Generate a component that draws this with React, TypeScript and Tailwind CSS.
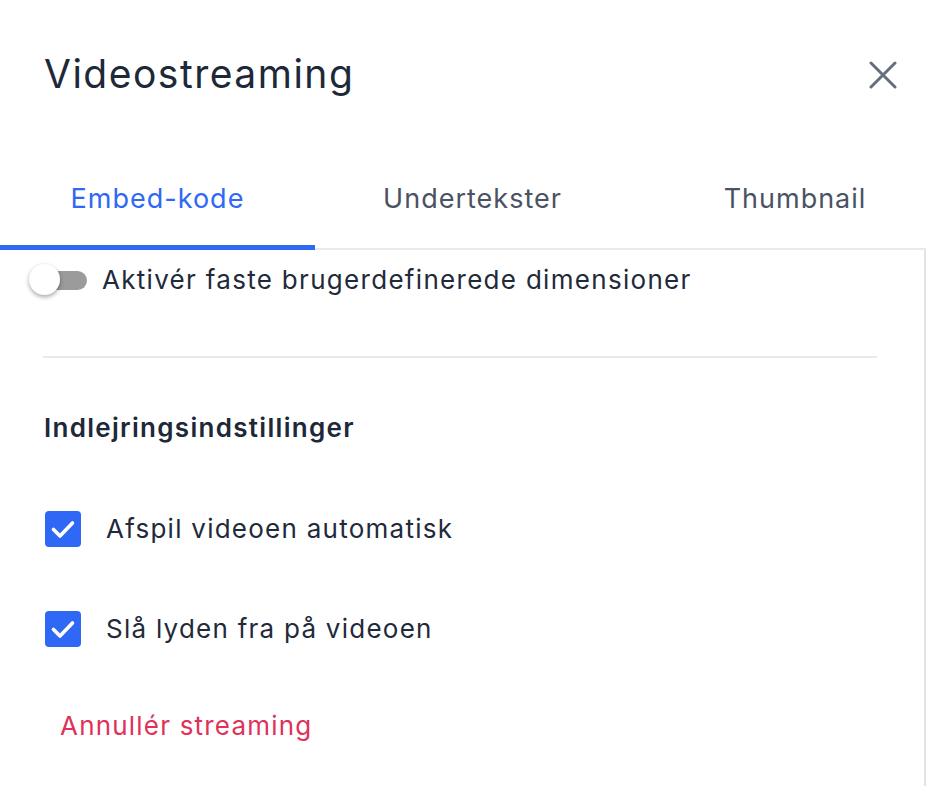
import { useState } from 'react'

type TabKey = 'embed' | 'subtitles' | 'thumbnail'

const tabs: { key: TabKey; label: string; extra?: string }[] = [
  { key: 'embed', label: 'Embed-kode' },
  { key: 'subtitles', label: 'Undertekster' },
  { key: 'thumbnail', label: 'Thumbnail', extra: 'pl-[34px]' },
]

function CheckIcon() {
  return (
    <svg viewBox="0 0 36 36" className="h-[36px] w-[36px]" aria-hidden>
      <rect width="36" height="36" rx="4" fill="#2f68f4" />
      <path d="M8.5 18.5l6.5 6.5 12.5-13" fill="none" stroke="#fff" strokeWidth="3.6" strokeLinecap="round" strokeLinejoin="round" />
    </svg>
  )
}

function Checkbox({ label, checked, onToggle }: { label: string; checked: boolean; onToggle: () => void }) {
  return (
    <label className="flex h-[36px] cursor-pointer items-center gap-[25px] pl-[45px]" onClick={onToggle}>
      {checked ? (
        <CheckIcon />
      ) : (
        <span className="block h-[36px] w-[36px] rounded-[4px] border-2 border-[#9aa1ad] bg-white" />
      )}
      <span className="text-[26px] leading-none tracking-[1.25px] text-[#1f2a3a]">{label}</span>
    </label>
  )
}

export default function App() {
  const [tab, setTab] = useState<TabKey>('embed')
  const [fixed, setFixed] = useState(false)
  const [autoplay, setAutoplay] = useState(true)
  const [muted, setMuted] = useState(true)

  return (
    <div className="h-[786px] w-[926px] overflow-hidden bg-white font-['Inter',sans-serif] text-[#1f2a3a]">
      {/* header */}
      <div className="flex h-[150px] items-start justify-between pl-[44px] pr-[29px] pt-[52px]">
        <h1 className="text-[39px] leading-[44px] tracking-[1.5px] text-[#1d2838]">Videostreaming</h1>
        <button type="button" className="mt-[9px] text-[#666d7c]" aria-label="Luk">
          <svg viewBox="0 0 28 28" className="h-[28px] w-[28px]" fill="none" stroke="currentColor" strokeWidth="3" strokeLinecap="round">
            <path d="M2 2l24 24M26 2L2 26" />
          </svg>
        </button>
      </div>

      {/* tabs */}
      <div className="grid h-[100px] grid-cols-[315px_315px_1fr] border-b-2 border-[#e8e9ee]">
        {tabs.map((t) => {
          const active = t.key === tab
          return (
            <button
              key={t.key}
              type="button"
              onClick={() => setTab(t.key)}
              className={`relative -mb-[2px] flex items-start justify-center pt-[35px] text-[27px] leading-none tracking-[1px] ${t.extra ?? ''} ${
                active ? 'text-[#2f68f4]' : 'text-[#4a5263]'
              }`}
            >
              {t.label}
              {active && <span className="absolute bottom-0 left-0 right-0 h-[5px] bg-[#2f68f4]" />}
            </button>
          )
        })}
      </div>

      {/* panel */}
      <div className="h-[536px] border-r-2 border-[#e3e3e3] pt-[14px]">
        <div className="flex items-center gap-[15px] pl-[29px]">
          <button
            type="button"
            onClick={() => setFixed(!fixed)}
            className="relative h-[32px] w-[58px]"
            aria-pressed={fixed}
          >
            <span className={`absolute left-[6px] top-[7px] h-[19px] w-[52px] rounded-full ${fixed ? 'bg-[#9bb7f7]' : 'bg-[#9b9b9b]'}`} />
            <span
              className={`absolute top-0 h-[31px] w-[31px] rounded-full bg-white shadow-[0_2px_4px_rgba(0,0,0,0.35)] ${fixed ? 'left-[28px]' : 'left-0'}`}
            />
          </button>
          <span className="text-[26px] leading-none tracking-[1.3px] text-[#1f2a3a]">Aktivér faste brugerdefinerede dimensioner</span>
        </div>

        <div className="ml-[43px] mr-[47px] mt-[60px] h-[2px] bg-[#e8e9ee]" />

        <h2 className="mt-[57px] pl-[44px] text-[26px] font-semibold leading-none tracking-[1.3px] text-[#1d2838]">
          Indlejringsindstillinger
        </h2>

        <div className="mt-[70px] flex flex-col gap-[64px]">
          <Checkbox label="Afspil videoen automatisk" checked={autoplay} onToggle={() => setAutoplay(!autoplay)} />
          <Checkbox label="Slå lyden fra på videoen" checked={muted} onToggle={() => setMuted(!muted)} />
        </div>

        <button type="button" className="mt-[66px] pl-[60px] text-[26px] leading-none tracking-[1.2px] text-[#e0315a]">
          Annullér streaming
        </button>
      </div>
    </div>
  )
}
